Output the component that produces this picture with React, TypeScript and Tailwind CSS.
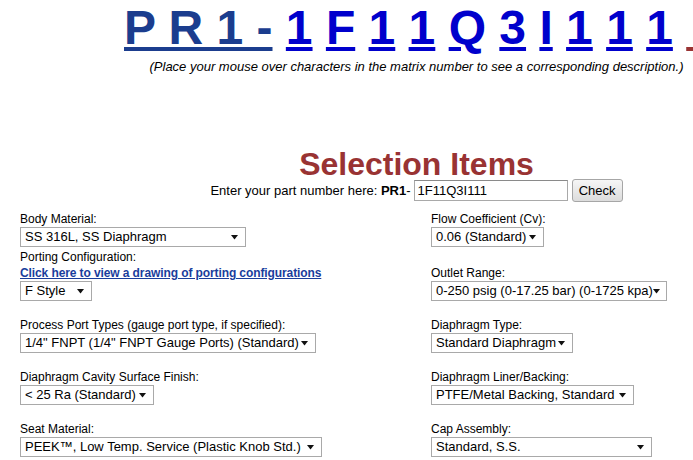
import React from "react";

type FieldProps = {
  label: string;
  value: string;
  width: string;
  link?: string;
};

const matrix = ["1", "F", "1", "1", "Q", "3", "I", "1", "1", "1"];

function Arrow() {
  return (
    <svg width="7" height="5" viewBox="0 0 7 5" className="shrink-0">
      <polygon points="0,0 7,0 3.5,4.5" fill="#111" />
    </svg>
  );
}

function Field({ label, value, width, link }: FieldProps) {
  return (
    <div className="flex flex-col">
      <div className="h-[16px] text-[12px] leading-[16px] whitespace-nowrap">{label}</div>
      {link ? (
        <a className="h-[16px] text-[12px] leading-[16px] font-bold tracking-[-0.1px] text-[#1a3d9c] underline whitespace-nowrap">
          {link}
        </a>
      ) : null}
      <div
        className={`flex h-[20px] items-center justify-between border border-[#a9a9a9] bg-white pl-[4px] pr-[7px] text-[13px] whitespace-nowrap ${width}`}
      >
        <span>{value}</span>
        <Arrow />
      </div>
    </div>
  );
}

export default function App() {
  return (
    <div className="h-[460px] w-[693px] overflow-hidden bg-white text-black font-['Liberation_Sans',Arial,sans-serif]">
      <div className="w-[833px]">
        {/* matrix number */}
        <div className="h-[55px] whitespace-nowrap pl-[124px] text-[48px] font-bold leading-[55px]">
          <a className="text-[#1b3d8e] underline">P R 1 -</a>{" "}
          {matrix.map((c, i) => (
            <React.Fragment key={i}>
              <a className="text-[#0000cc] underline">{c}</a>{" "}
            </React.Fragment>
          ))}
          <a className="text-[#993333] underline">{"\u00a0\u00a0"}</a>
        </div>
        <div className="mt-[4px] text-center text-[13px] italic leading-[15px]">
          (Place your mouse over characters in the matrix number to see a corresponding description.)
        </div>

        <h1 className="mt-[76px] text-center text-[32px] font-bold leading-[29px] text-[#993333]">
          Selection Items
        </h1>
        <div className="flex h-[23px] items-center justify-center text-[13px]">
          <span>
            Enter your part number here: <b>PR1</b>-
          </span>
          <input
            className="ml-[3px] h-[21px] w-[154px] border border-[#a9a9a9] border-t-[#8a8a8a] px-[3px] text-[13px] outline-none"
            defaultValue="1F11Q3I111"
          />
          <button className="ml-[4px] h-[23px] w-[51px] rounded-[3px] border border-[#a6a6a6] bg-linear-to-b from-[#f6f6f6] to-[#dcdcdc] text-[13px]">
            Check
          </button>
        </div>

        {/* selection fields */}
        <div className="mt-[9px] pl-[20px]">
          <div className="flex items-end">
            <div className="w-[411px]">
              <Field label="Body Material:" value="SS 316L, SS Diaphragm" width="w-[226px]" />
            </div>
            <Field label="Flow Coefficient (Cv):" value="0.06 (Standard)" width="w-[113px]" />
          </div>
          <div className="mt-[2px] flex items-end">
            <div className="w-[411px]">
              <Field
                label="Porting Configuration:"
                link="Click here to view a drawing of porting configurations"
                value="F Style"
                width="w-[72px]"
              />
            </div>
            <Field label="Outlet Range:" value="0-250 psig (0-17.25 bar) (0-1725 kpa)" width="w-[236px]" />
          </div>
          <div className="mt-[16px] flex items-end">
            <div className="w-[411px]">
              <Field
                label="Process Port Types (gauge port type, if specified):"
                value={'1/4" FNPT (1/4" FNPT Gauge Ports) (Standard)'}
                width="w-[296px]"
              />
            </div>
            <Field label="Diaphragm Type:" value="Standard Diaphragm" width="w-[142px]" />
          </div>
          <div className="mt-[16px] flex items-end">
            <div className="w-[411px]">
              <Field label="Diaphragm Cavity Surface Finish:" value="< 25 Ra (Standard)" width="w-[134px]" />
            </div>
            <Field label="Diaphragm Liner/Backing:" value="PTFE/Metal Backing, Standard" width="w-[203px]" />
          </div>
          <div className="mt-[16px] flex items-end">
            <div className="w-[411px]">
              <Field
                label="Seat Material:"
                value="PEEK™, Low Temp. Service (Plastic Knob Std.)"
                width="w-[302px]"
              />
            </div>
            <Field label="Cap Assembly:" value="Standard, S.S." width="w-[221px]" />
          </div>
        </div>
      </div>
    </div>
  );
}
